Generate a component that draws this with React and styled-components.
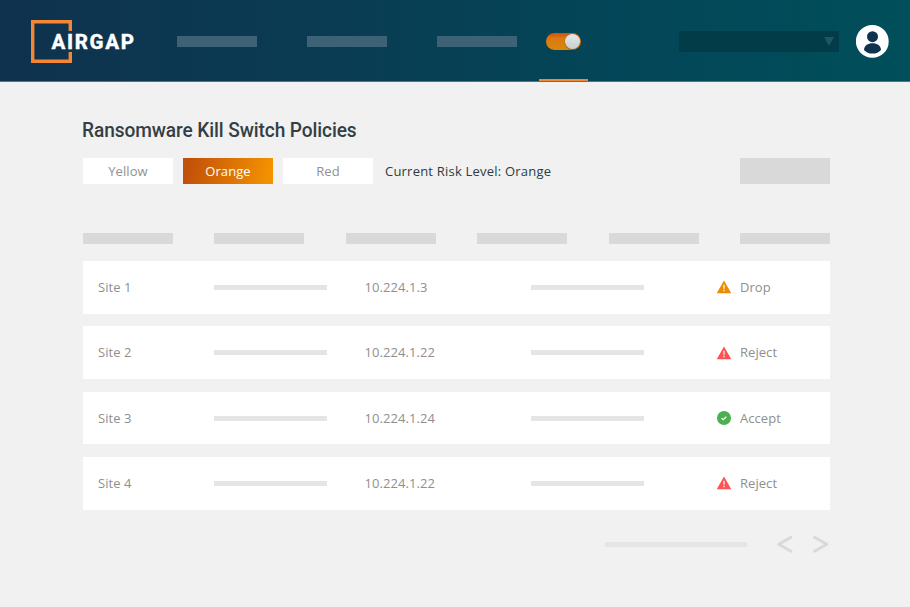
import React from "react";
import styled, { createGlobalStyle, css } from "styled-components";

const GlobalStyle = createGlobalStyle`
  * { box-sizing: border-box; }
  body { margin: 0; background: #f1f1f1; font-family: "Open Sans", "Noto Sans", sans-serif; }
`;

const Page = styled.div`
  width: 910px;
  height: 607px;
  overflow: hidden;
  background: #f1f1f1;
`;

const TopBar = styled.header`
  display: flex;
  align-items: flex-start;
  height: 82px;
  border-bottom: 1px solid #4f7682;
  background: linear-gradient(90deg, #0f324e 0%, #0b3a52 30%, #044558 65%, #004f5a 100%);
`;

const Logo = styled.svg`
  flex: none;
  width: 177px;
  height: 81px;
`;

const NavItem = styled.div`
  flex: none;
  width: 80px;
  height: 11px;
  margin: 36px 50px 0 0;
  background: #3d6175;

  &:nth-of-type(3) { margin-right: 22px; }
`;

const ActiveTab = styled.div`
  flex: none;
  display: flex;
  justify-content: center;
  width: 49px;
  height: 81px;
  padding-top: 33px;
  border-bottom: 2px solid #f58634;
`;

const Toggle = styled.div`
  display: flex;
  justify-content: flex-end;
  align-items: center;
  width: 35px;
  height: 17px;
  padding-right: 1.5px;
  border-radius: 9px;
  background: linear-gradient(180deg, #d04e18 0%, #d9780f 30%, #d9880d 100%);
`;

const Knob = styled.div`
  width: 15px;
  height: 15px;
  border-radius: 50%;
  background: linear-gradient(180deg, #e4e8ea, #c8ced1);
  box-shadow: 0 1px 1px rgba(80, 50, 10, 0.5);
`;

const Selector = styled.div`
  flex: none;
  display: flex;
  justify-content: flex-end;
  align-items: center;
  width: 160px;
  height: 21px;
  margin: 31px 17px 0 91px;
  padding-right: 5px;
  background: #023c49;
`;

const Avatar = styled.svg`
  flex: none;
  width: 33px;
  height: 33px;
  margin-top: 25px;
`;

const Main = styled.main`
  width: 747px;
  margin-left: 83px;
  padding-top: 34px;
`;

const Title = styled.h1`
  margin: 0 0 0 -1px;
  height: 28px;
  font: 500 20px/28px Roboto, sans-serif;
  letter-spacing: -0.1px;
  color: #333f45;
  white-space: nowrap;
  transform: scaleX(0.955);
  transform-origin: 0 50%;
`;

const Controls = styled.div`
  display: flex;
  align-items: center;
  height: 26px;
  margin-top: 14px;
`;

const LevelButton = styled.button`
  width: 90px;
  height: 26px;
  margin: 0 10px 0 0;
  padding: 0;
  border: 0;
  font: 400 13px/26px "Open Sans", sans-serif;
  letter-spacing: 0.08px;
  color: #919191;
  background: #fff;
  ${({ $active }) => $active && css`
    color: #fff;
    background: linear-gradient(100deg, #c15008 5%, #f39200 95%);
  `}
`;

const RiskLevel = styled.div`
  margin-left: 2px;
  font-size: 13px;
  font-weight: 500;
  line-height: 26px;
  letter-spacing: 0.21px;
  color: #2e3b40;
  white-space: nowrap;
`;

const ActionBlock = styled.div`
  width: 90px;
  height: 26px;
  margin-left: auto;
  background: #d9d9d9;
`;

const ColumnHeads = styled.div`
  display: flex;
  justify-content: space-between;
  margin-top: 49px;
`;

const ColumnHead = styled.div`
  width: 90px;
  height: 10.5px;
  background: #d9d9d9;
`;

const Rows = styled.div`
  display: flex;
  flex-direction: column;
  gap: 12.7px;
  margin-top: 17.5px;
`;

const Row = styled.div`
  display: grid;
  grid-template-columns: 116.4px 150.2px 166.8px 185.6px 23px 1fr;
  align-items: center;
  height: 52.7px;
  padding-left: 15px;
  background: #fff;
  font-size: 13px;
  line-height: 18px;
  letter-spacing: 0.06px;
  color: #8f8f8f;
`;

const Cell = styled.span`
  padding-bottom: 1px;
`;

const Placeholder = styled.div`
  width: ${({ $width }) => $width}px;
  height: 5px;
  background: #e5e5e5;
`;

const StatusSvg = styled.svg`
  display: block;
  width: 14px;
  height: 14px;
`;

const Footer = styled.footer`
  display: flex;
  align-items: center;
  justify-content: flex-end;
  height: 18px;
  margin: 25.5px 1px 0 0;
`;

const Chevron = styled.svg`
  width: 16px;
  height: 18px;
  margin-left: ${({ $gap }) => $gap}px;
  fill: none;
  stroke: #d9d9d9;
  stroke-width: 2.8;
  stroke-linecap: round;
  stroke-linejoin: round;
`;

const policies = [
  { site: "Site 1", ip: "10.224.1.3", action: "Drop" },
  { site: "Site 2", ip: "10.224.1.22", action: "Reject" },
  { site: "Site 3", ip: "10.224.1.24", action: "Accept" },
  { site: "Site 4", ip: "10.224.1.22", action: "Reject" },
];

function StatusIcon({ action }) {
  if (action === "Accept") {
    return (
      <StatusSvg viewBox="0 0 14 14">
        <circle cx="7" cy="7" r="7" fill="#4caf50" />
        <path d="M4.5 7.1l1.7 1.6 3.1-3" fill="none" stroke="#fff" strokeWidth="1.2" />
      </StatusSvg>
    );
  }
  return (
    <StatusSvg viewBox="0 0 14 14">
      <path d="M7 .4L14.2 13.2H-.2z" fill={action === "Drop" ? "#ee8b00" : "#ff5252"} />
      <path d="M7 4.8v4M7 9.8v1.5" stroke="#fff" strokeWidth="1.5" strokeOpacity="0.8" />
    </StatusSvg>
  );
}

export default function App() {
  return (
    <Page>
      <GlobalStyle />
      <TopBar>
        <Logo viewBox="0 0 177 81">
          <path d="M70.3 31V21.7H32.7v39.6h37.6V52" fill="none" stroke="#f58634" strokeWidth="3.4" />
          <text
            x="51.5" y="49" textLength="82.5" lengthAdjust="spacing"
            fontFamily="Roboto, sans-serif" fontWeight="800" fontSize="20.5"
            fill="#fff" stroke="#fff" strokeWidth="0.3" strokeLinejoin="round"
          >AIRGAP</text>
        </Logo>
        <NavItem />
        <NavItem />
        <NavItem />
        <ActiveTab>
          <Toggle><Knob /></Toggle>
        </ActiveTab>
        <Selector>
          <svg width="10" height="9" viewBox="0 0 10 9"><path d="M0 0h10L5 9z" fill="#1e5662" /></svg>
        </Selector>
        <Avatar viewBox="0 0 33 33">
          <circle cx="16.3" cy="16.4" r="16.4" fill="#fff" />
          <circle cx="16.5" cy="11.7" r="5.5" fill="#0f324e" />
          <path d="M8 24.9c0-4 3.8-6.7 8.5-6.7s8.5 2.7 8.5 6.7c-2 2.4-5 3.7-8.5 3.7S10 27.3 8 24.9z" fill="#0f324e" />
        </Avatar>
      </TopBar>
      <Main>
        <Title>Ransomware Kill Switch Policies</Title>
        <Controls>
          <LevelButton>Yellow</LevelButton>
          <LevelButton $active>Orange</LevelButton>
          <LevelButton>Red</LevelButton>
          <RiskLevel>Current Risk Level: Orange</RiskLevel>
          <ActionBlock />
        </Controls>
        <ColumnHeads>
          {[0, 1, 2, 3, 4, 5].map((i) => <ColumnHead key={i} />)}
        </ColumnHeads>
        <Rows>
          {policies.map((policy) => (
            <Row key={policy.site}>
              <Cell>{policy.site}</Cell>
              <Placeholder $width={113} />
              <Cell>{policy.ip}</Cell>
              <Placeholder $width={113} />
              <StatusIcon action={policy.action} />
              <Cell>{policy.action}</Cell>
            </Row>
          ))}
        </Rows>
        <Footer>
          <Placeholder $width={142} />
          <Chevron $gap={30} viewBox="0 0 16 18"><path d="M14 2.2L1.7 9.2l12.3 7" /></Chevron>
          <Chevron $gap={20} viewBox="0 0 16 18"><path d="M1.5 2.2L13.8 9.2l-12.3 7" /></Chevron>
        </Footer>
      </Main>
    </Page>
  );
}
